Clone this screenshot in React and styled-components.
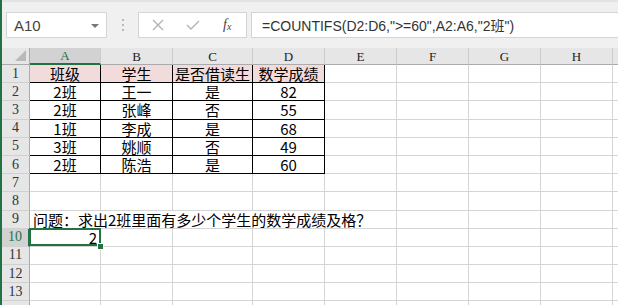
import styled, { createGlobalStyle } from "styled-components";

const GlobalStyle = createGlobalStyle`
  html, body {
    margin: 0;
    padding: 0;
    background: #fff;
    overflow: hidden;
  }
`;

const green = "#217346";
const cjk = `"Noto Sans CJK SC", "Liberation Sans", sans-serif`;

const columns = ["A", "B", "C", "D", "E", "F", "G", "H", ""];

const table = [
  ["班级", "学生", "是否借读生", "数学成绩"],
  ["2班", "王一", "是", "82"],
  ["2班", "张峰", "否", "55"],
  ["1班", "李成", "是", "68"],
  ["3班", "姚顺", "否", "49"],
  ["2班", "陈浩", "是", "60"],
];

const Frame = styled.div`
  width: 618px;
  height: 305px;
  border-left: 2px solid ${green};
  box-sizing: border-box;
  background: #f0f0f0;
  display: flex;
  flex-direction: column;
  overflow: hidden;
`;

const Toolbar = styled.div`
  height: 48px;
  flex: none;
  box-sizing: border-box;
  padding: 10px 0 10px 4px;
  display: flex;
  align-items: stretch;
  border-top: 2px solid #e3e3e3;
`;

const NameBox = styled.div`
  width: 101px;
  box-sizing: border-box;
  background: #fff;
  border: 1px solid #d4d4d4;
  display: flex;
  align-items: center;
  justify-content: space-between;
  padding: 0 7px;
  font-family: "Liberation Sans", sans-serif;
  font-size: 15px;
  color: #444;
`;

const Caret = styled.span`
  width: 0;
  height: 0;
  border-left: 4px solid transparent;
  border-right: 4px solid transparent;
  border-top: 4px solid #777;
  margin-top: 1px;
`;

const Grip = styled.div`
  width: 31px;
  display: flex;
  flex-direction: column;
  align-items: center;
  justify-content: center;
  gap: 3px;
  span {
    width: 2px;
    height: 2px;
    background: #b8b8b8;
  }
`;

const ActionBox = styled.div`
  width: 109px;
  box-sizing: border-box;
  background: #fff;
  border: 1px solid #d4d4d4;
  display: flex;
  align-items: center;
  padding-left: 13px;
`;

const IconSlot = styled.span`
  width: 34px;
  display: flex;
  align-items: center;
`;

const Fx = styled.span`
  font-family: "Liberation Serif", serif;
  font-style: italic;
  font-size: 14px;
  color: #444;
  margin-left: 3px;
  sub {
    font-size: 10px;
    vertical-align: -1px;
  }
`;

const FormulaInput = styled.div`
  flex: 1;
  margin-left: 4px;
  background: #fff;
  border: 1px solid #d4d4d4;
  border-right: none;
  display: flex;
  align-items: center;
  padding-left: 10px;
  font-family: "Liberation Sans", ${cjk};
  font-size: 14px;
  color: #333;
  white-space: nowrap;
`;

const Sheet = styled.div`
  flex: 1;
  display: grid;
  grid-template-columns: 28px 71px 72px 80px 72px 72px 72px 72px 72px 1fr;
  grid-template-rows: 17px repeat(14, 18.2px);
  background: #fff;
`;

const Corner = styled.div`
  background: #e6e6e6;
  border-bottom: 1px solid #ababab;
  border-right: 1px solid #ababab;
  box-sizing: border-box;
  position: relative;
  &::after {
    content: "";
    position: absolute;
    right: 3px;
    bottom: 3px;
    border-left: 11px solid transparent;
    border-bottom: 11px solid #b9b9b9;
  }
`;

const ColHead = styled.div`
  box-sizing: border-box;
  background: ${(p) => (p.$active ? "#d2d2d2" : "#e6e6e6")};
  border-bottom: ${(p) => (p.$active ? `2px solid ${green}` : "1px solid #ababab")};
  border-right: 1px solid #cdcdcd;
  display: flex;
  align-items: center;
  justify-content: center;
  font-family: "Liberation Serif", serif;
  font-size: 13px;
  line-height: 1;
  color: ${(p) => (p.$active ? green : "#222")};
`;

const RowHead = styled.div`
  box-sizing: border-box;
  background: ${(p) => (p.$active ? "#d2d2d2" : "#e6e6e6")};
  border-right: ${(p) => (p.$active ? `2px solid ${green}` : "1px solid #ababab")};
  border-bottom: 1px solid #d0d0d0;
  display: flex;
  align-items: center;
  justify-content: center;
  font-family: "Liberation Serif", serif;
  font-size: 14px;
  line-height: 1;
  color: ${(p) => (p.$active ? green : "#333")};
`;

const Cell = styled.div`
  box-sizing: border-box;
  position: relative;
  grid-column: ${(p) => (p.$span ? `span ${p.$span}` : "auto")};
  background: ${(p) => (p.$fill ? "#f2dcdb" : "#fff")};
  border-right: 1px solid ${(p) => (p.$boxed ? "#000" : "#d4d4d4")};
  border-bottom: 1px solid ${(p) => (p.$boxed ? "#000" : "#d4d4d4")};
  display: flex;
  align-items: center;
  justify-content: ${(p) => p.$align || "center"};
  padding: 0 3px;
  font-family: ${cjk};
  font-size: 15px;
  line-height: 1;
  color: #000;
  white-space: nowrap;
  z-index: ${(p) => (p.$selected ? 2 : 1)};

  ${(p) =>
    p.$selected &&
    `
    &::before {
      content: "";
      position: absolute;
      left: -1px;
      top: -1px;
      right: -1px;
      bottom: 0;
      border: 2px solid ${green};
    }
    &::after {
      content: "";
      position: absolute;
      right: -4px;
      bottom: -4px;
      width: 5px;
      height: 5px;
      background: ${green};
      border: 1px solid #fff;
    }
  `}
`;

const CloseIcon = () => (
  <svg width="12" height="12" viewBox="0 0 12 12">
    <path d="M1 1 L11 11 M11 1 L1 11" stroke="#b3b3b3" strokeWidth="1.4" fill="none" />
  </svg>
);

const CheckIcon = () => (
  <svg width="14" height="12" viewBox="0 0 14 12">
    <path d="M1 6 L5 10 L13 2" stroke="#b3b3b3" strokeWidth="1.4" fill="none" />
  </svg>
);

const renderRow = (r) => {
  const cells = [];
  if (r >= 1 && r <= 6) {
    table[r - 1].forEach((v, i) =>
      cells.push(
        <Cell key={i} $boxed $fill={r === 1}>
          {v}
        </Cell>
      )
    );
    for (let i = 4; i < 9; i++) cells.push(<Cell key={i} />);
  } else if (r === 9) {
    cells.push(
      <Cell key="q" $span={5} $align="flex-start">
        问题：求出2班里面有多少个学生的数学成绩及格？
      </Cell>
    );
    for (let i = 5; i < 9; i++) cells.push(<Cell key={i} />);
  } else if (r === 10) {
    cells.push(
      <Cell key="a" $selected $align="flex-end">
        2
      </Cell>
    );
    for (let i = 1; i < 9; i++) cells.push(<Cell key={i} />);
  } else {
    for (let i = 0; i < 9; i++) cells.push(<Cell key={i} />);
  }
  return cells;
};

const App = () => {
  const rows = Array.from({ length: 14 }, (_, i) => i + 1);
  return (
    <Frame>
      <GlobalStyle />
      <Toolbar>
        <NameBox>
          A10
          <Caret />
        </NameBox>
        <Grip>
          <span />
          <span />
          <span />
        </Grip>
        <ActionBox>
          <IconSlot>
            <CloseIcon />
          </IconSlot>
          <IconSlot>
            <CheckIcon />
          </IconSlot>
          <Fx>
            f<sub>x</sub>
          </Fx>
        </ActionBox>
        <FormulaInput>=COUNTIFS(D2:D6,"&gt;=60",A2:A6,"2班")</FormulaInput>
      </Toolbar>
      <Sheet>
        <Corner />
        {columns.map((c, i) => (
          <ColHead key={i} $active={c === "A"}>
            {c}
          </ColHead>
        ))}
        {rows.map((r) => [
          <RowHead key={"h" + r} $active={r === 10}>
            {r < 14 ? r : ""}
          </RowHead>,
          ...renderRow(r).map((el, i) => ({ ...el, key: r + "-" + i })),
        ])}
      </Sheet>
    </Frame>
  );
};

export default App;
